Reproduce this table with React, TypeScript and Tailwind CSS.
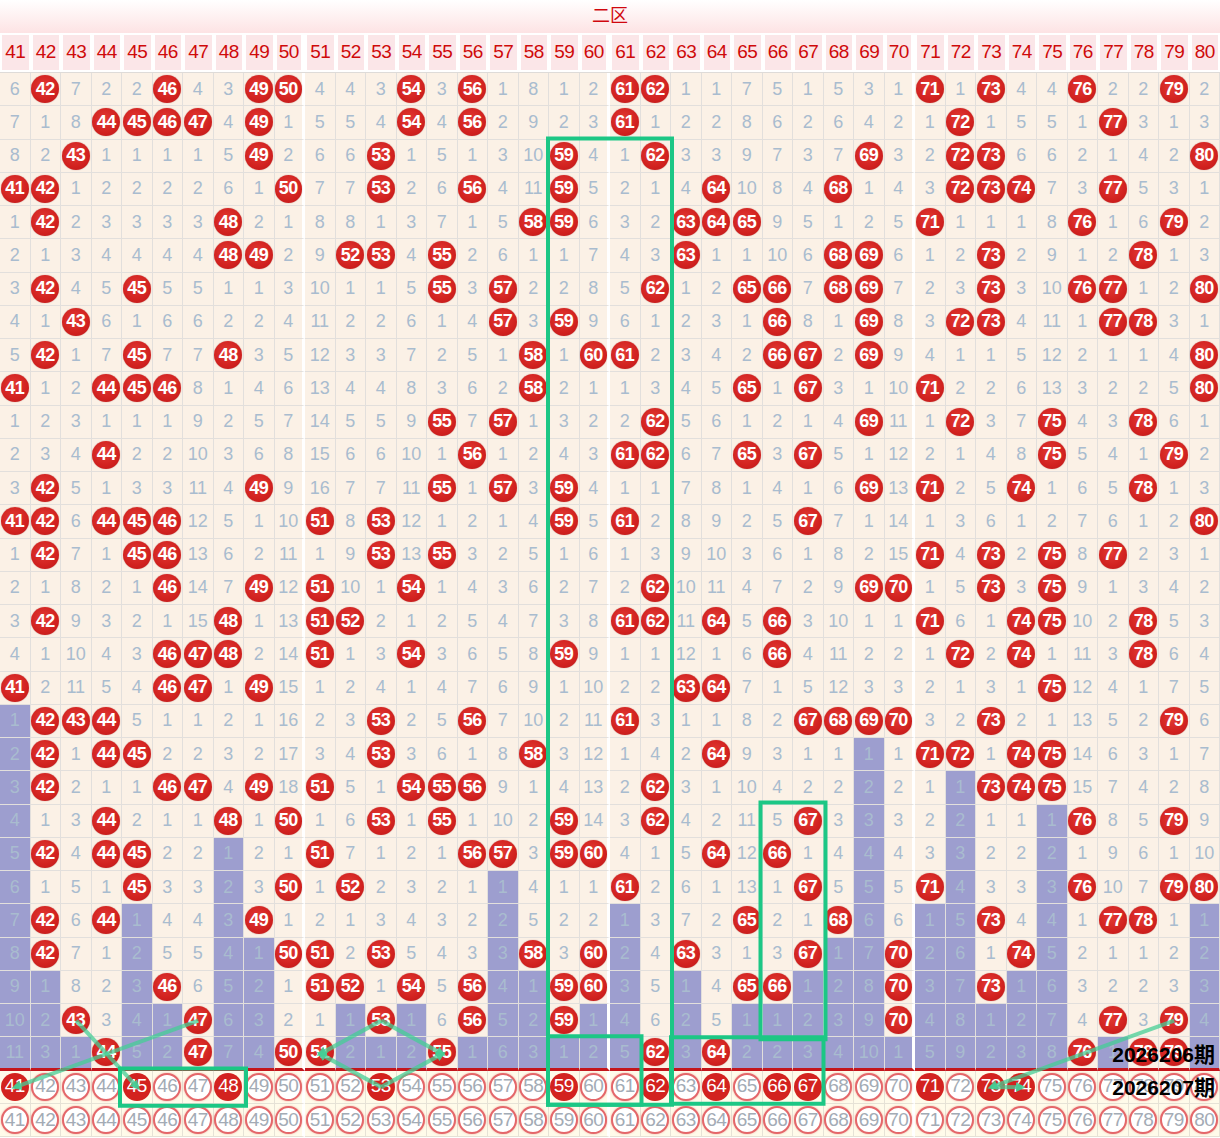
import clsx from 'clsx'

// 二区 omission chart: 30 draws + next draw + reference row

const ROWS: string[] = [
  '6 42 7 2 2 46 4 3 49 50 4 4 3 54 3 56 1 8 1 2 61 62 1 1 7 5 1 5 3 1 71 1 73 4 4 76 2 2 79 2',
  '7 1 8 44 45 46 47 4 49 1 5 5 4 54 4 56 2 9 2 3 61 1 2 2 8 6 2 6 4 2 1 72 1 5 5 1 77 3 1 3',
  '8 2 43 1 1 1 1 5 49 2 6 6 53 1 5 1 3 10 59 4 1 62 3 3 9 7 3 7 69 3 2 72 73 6 6 2 1 4 2 80',
  '41 42 1 2 2 2 2 6 1 50 7 7 53 2 6 56 4 11 59 5 2 1 4 64 10 8 4 68 1 4 3 72 73 74 7 3 77 5 3 1',
  '1 42 2 3 3 3 3 48 2 1 8 8 1 3 7 1 5 58 59 6 3 2 63 64 65 9 5 1 2 5 71 1 1 1 8 76 1 6 79 2',
  '2 1 3 4 4 4 4 48 49 2 9 52 53 4 55 2 6 1 1 7 4 3 63 1 1 10 6 68 69 6 1 2 73 2 9 1 2 78 1 3',
  '3 42 4 5 45 5 5 1 1 3 10 1 1 5 55 3 57 2 2 8 5 62 1 2 65 66 7 68 69 7 2 3 73 3 10 76 77 1 2 80',
  '4 1 43 6 1 6 6 2 2 4 11 2 2 6 1 4 57 3 59 9 6 1 2 3 1 66 8 1 69 8 3 72 73 4 11 1 77 78 3 1',
  '5 42 1 7 45 7 7 48 3 5 12 3 3 7 2 5 1 58 1 60 61 2 3 4 2 66 67 2 69 9 4 1 1 5 12 2 1 1 4 80',
  '41 1 2 44 45 46 8 1 4 6 13 4 4 8 3 6 2 58 2 1 1 3 4 5 65 1 67 3 1 10 71 2 2 6 13 3 2 2 5 80',
  '1 2 3 1 1 1 9 2 5 7 14 5 5 9 55 7 57 1 3 2 2 62 5 6 1 2 1 4 69 11 1 72 3 7 75 4 3 78 6 1',
  '2 3 4 44 2 2 10 3 6 8 15 6 6 10 1 56 1 2 4 3 61 62 6 7 65 3 67 5 1 12 2 1 4 8 75 5 4 1 79 2',
  '3 42 5 1 3 3 11 4 49 9 16 7 7 11 55 1 57 3 59 4 1 1 7 8 1 4 1 6 69 13 71 2 5 74 1 6 5 78 1 3',
  '41 42 6 44 45 46 12 5 1 10 51 8 53 12 1 2 1 4 59 5 61 2 8 9 2 5 67 7 1 14 1 3 6 1 2 7 6 1 2 80',
  '1 42 7 1 45 46 13 6 2 11 1 9 53 13 55 3 2 5 1 6 1 3 9 10 3 6 1 8 2 15 71 4 73 2 75 8 77 2 3 1',
  '2 1 8 2 1 46 14 7 49 12 51 10 1 54 1 4 3 6 2 7 2 62 10 11 4 7 2 9 69 70 1 5 73 3 75 9 1 3 4 2',
  '3 42 9 3 2 1 15 48 1 13 51 52 2 1 2 5 4 7 3 8 61 62 11 64 5 66 3 10 1 1 71 6 1 74 75 10 2 78 5 3',
  '4 1 10 4 3 46 47 48 2 14 51 1 3 54 3 6 5 8 59 9 1 1 12 1 6 66 4 11 2 2 1 72 2 74 1 11 3 78 6 4',
  '41 2 11 5 4 46 47 1 49 15 1 2 4 1 4 7 6 9 1 10 2 2 63 64 7 1 5 12 3 3 2 1 3 1 75 12 4 1 7 5',
  '1 42 43 44 5 1 1 2 1 16 2 3 53 2 5 56 7 10 2 11 61 3 1 1 8 2 67 68 69 70 3 2 73 2 1 13 5 2 79 6',
  '2 42 1 44 45 2 2 3 2 17 3 4 53 3 6 1 8 58 3 12 1 4 2 64 9 3 1 1 1 1 71 72 1 74 75 14 6 3 1 7',
  '3 42 2 1 1 46 47 4 49 18 51 5 1 54 55 56 9 1 4 13 2 62 3 1 10 4 2 2 2 2 1 1 73 74 75 15 7 4 2 8',
  '4 1 3 44 2 1 1 48 1 50 1 6 53 1 55 1 10 2 59 14 3 62 4 2 11 5 67 3 3 3 2 2 1 1 1 76 8 5 79 9',
  '5 42 4 44 45 2 2 1 2 1 51 7 1 2 1 56 57 3 59 60 4 1 5 64 12 66 1 4 4 4 3 3 2 2 2 1 9 6 1 10',
  '6 1 5 1 45 3 3 2 3 50 1 52 2 3 2 1 1 4 1 1 61 2 6 1 13 1 67 5 5 5 71 4 3 3 3 76 10 7 79 80',
  '7 42 6 44 1 4 4 3 49 1 2 1 3 4 3 2 2 5 2 2 1 3 7 2 65 2 1 68 6 6 1 5 73 4 4 1 77 78 1 1',
  '8 42 7 1 2 5 5 4 1 50 51 2 53 5 4 3 3 58 3 60 2 4 63 3 1 3 67 1 7 70 2 6 1 74 5 2 1 1 2 2',
  '9 1 8 2 3 46 6 5 2 1 51 52 1 54 5 56 4 1 59 60 3 5 1 4 65 66 1 2 8 70 3 7 73 1 6 3 2 2 3 3',
  '10 2 43 3 4 1 47 6 3 2 1 1 53 1 6 56 5 2 59 1 4 6 2 5 1 1 2 3 9 70 4 8 1 2 7 4 77 3 79 4',
  '11 3 1 44 5 2 47 7 4 50 51 2 1 2 55 1 6 3 1 2 5 62 3 64 2 2 3 4 10 1 5 9 2 3 8 76 1 78 79 5',
]

const DATA = ROWS.map((r) => r.split(' ').map(Number))
const NUMS = Array.from({ length: 40 }, (_, i) => 41 + i)
const NEXT = [41, 45, 48, 53, 59, 62, 64, 66, 67, 71, 73, 74]

// last row index with a hit, per column — cells below it get the purple bar
const LAST_HIT = NUMS.map((_, c) => {
  let last = -1
  DATA.forEach((row, r) => {
    if (row[c] >= 41) last = r
  })
  return last
})

const COL_W = 30.5
const ROW_H = 33.25
const TOP = 73
const cx = (n: number) => (n - 41) * COL_W + COL_W / 2
const cy = (row: number) => TOP + (row - 1) * ROW_H + ROW_H / 2
const colL = (n: number) => (n - 41) * COL_W
const rowT = (row: number) => TOP + (row - 1) * ROW_H

function edge(c: number) {
  return c % 10 === 9 && c < 39
}

function DataCell({ v, c, purple, last }: { v: number; c: number; purple: boolean; last: boolean }) {
  return (
    <div
      className={clsx(
        'flex h-[33.25px] items-center justify-center border-b border-r',
        edge(c) ? 'border-r-[3px] border-r-white' : 'border-r-[#e2dfdc]',
        last ? 'border-b-[3px] border-b-[#c4161c]' : 'border-b-[#e2dfdc]',
        purple ? 'bg-[#9d9ecf]' : 'bg-[#fbf1e6]'
      )}
    >
      {v >= 41 ? (
        <span className="flex h-[28px] w-[28px] items-center justify-center rounded-full bg-[radial-gradient(circle_at_45%_40%,#e23a34_0%,#d1211f_60%,#b8171a_100%)] text-[18px] font-bold tracking-[-0.5px] text-white shadow-[0_0_1px_rgba(120,0,0,0.6)]">
          {v}
        </span>
      ) : (
        <span className="text-[18px] text-[#a9bccf]">{v}</span>
      )}
    </div>
  )
}

function RingCell({ n, c, hit }: { n: number; c: number; hit: boolean }) {
  return (
    <div
      className={clsx(
        'flex h-[33.25px] items-center justify-center border-b border-r border-b-[#e6e2d6] bg-[#fffbea]',
        edge(c) ? 'border-r-[3px] border-r-white' : 'border-r-[#e6e2d6]'
      )}
    >
      {hit ? (
        <span className="flex h-[28px] w-[28px] items-center justify-center rounded-full bg-[#d3221f] text-[19px] tracking-[-0.5px] text-white">
          {n}
        </span>
      ) : (
        <span className="flex h-[28px] w-[28px] items-center justify-center rounded-full border-2 border-[#e4676a] bg-white text-[19px] tracking-[-0.5px] text-[#a3abb5] shadow-[0_0_2px_rgba(220,80,80,0.5)]">
          {n}
        </span>
      )}
    </div>
  )
}

function Overlay() {
  const box = '#1cc785'
  const line = 'rgba(70,205,150,0.75)'
  const seg = (a: [number, number], b: [number, number], arrow = true) => (
    <line
      x1={cx(a[0])}
      y1={cy(a[1])}
      x2={cx(b[0])}
      y2={cy(b[1])}
      stroke={line}
      strokeWidth={4}
      markerEnd={arrow ? 'url(#ah)' : undefined}
    />
  )
  const rect = (n1: number, n2: number, r1: number, r2: number, pad = 0) => (
    <rect
      x={colL(n1) - pad}
      y={rowT(r1) - pad}
      width={colL(n2 + 1) - colL(n1) + pad * 2}
      height={rowT(r2 + 1) - rowT(r1) + pad * 2}
      fill="none"
      stroke={box}
      strokeWidth={4}
    />
  )
  return (
    <svg className="pointer-events-none absolute left-0 top-0" width={1220} height={1138}>
      <defs>
        <marker id="ah" viewBox="0 0 10 10" refX="6" refY="5" markerWidth="2.5" markerHeight="2.5" orient="auto">
          <path d="M0,0 L10,5 L0,10 z" fill="rgba(70,205,150,0.9)" />
        </marker>
      </defs>
      {seg([47, 29], [41, 31])}
      {seg([43, 29], [45, 31])}
      {seg([53, 29], [51, 30])}
      {seg([53, 31], [51, 30])}
      {seg([53, 29], [55, 30])}
      {seg([53, 31], [55, 30])}
      {seg([79, 29], [73, 31])}
      {seg([73, 31], [74, 31])}
      {rect(59, 62, 3, 31, 1)}
      {rect(59, 61, 30, 31, 1)}
      {rect(63, 67, 30, 31, 0)}
      {rect(66, 67, 23, 29, 2)}
      {rect(45, 48, 31, 31, 2)}
    </svg>
  )
}

export default function App() {
  return (
    <div className="relative w-[1220px] overflow-hidden bg-white font-['Liberation_Sans','Noto_Sans_CJK_SC',sans-serif]">
      {/* title */}
      <div className="flex h-[33px] items-center justify-center bg-linear-to-b from-white to-[#fde3e4] text-[18px] text-[#d0070e]">
        二区
      </div>

      {/* number header */}
      <div className="grid h-[40px] grid-cols-[repeat(40,minmax(0,1fr))] border-b border-b-[#dedbd8] bg-white">
        {NUMS.map((n, c) => (
          <div
            key={n}
            className={clsx(
              'flex items-center justify-center border-2 border-white bg-[#fbe6e8] text-[19px] tracking-[-0.5px] text-[#cf0a0a]',
              edge(c) && 'border-r-[4px]'
            )}
          >
            {n}
          </div>
        ))}
      </div>

      {/* draws */}
      {DATA.map((row, r) => (
        <div key={r} className="grid grid-cols-[repeat(40,minmax(0,1fr))]">
          {row.map((v, c) => (
            <DataCell key={c} v={v} c={c} purple={r > LAST_HIT[c]} last={r === DATA.length - 1} />
          ))}
        </div>
      ))}

      {/* next draw */}
      <div className="grid grid-cols-[repeat(40,minmax(0,1fr))]">
        {NUMS.map((n, c) => (
          <RingCell key={n} n={n} c={c} hit={NEXT.includes(n)} />
        ))}
      </div>
      <div className="grid grid-cols-[repeat(40,minmax(0,1fr))]">
        {NUMS.map((n, c) => (
          <RingCell key={n} n={n} c={c} hit={false} />
        ))}
      </div>

      <Overlay />

      <div className="absolute right-[5px] top-[1044px] text-[21px] font-bold leading-none text-black">2026206期</div>
      <div className="absolute right-[5px] top-[1077px] text-[21px] font-bold leading-none text-black">2026207期</div>
    </div>
  )
}
